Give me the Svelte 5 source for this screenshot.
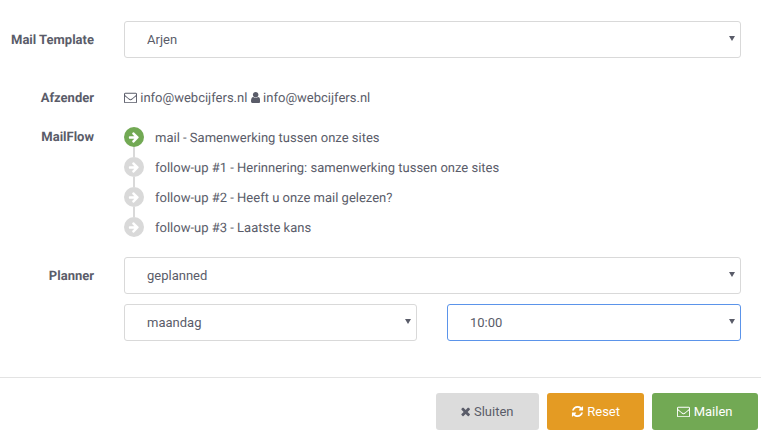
<script lang="ts">
	const icons = {
		envelope: "M1664 1504v-768q-32 36-69 66-268 206-426 338-51 43-83 67t-86.500 48.500-102.500 24.500h-2q-48 0-102.500-24.500t-86.500-48.500-83-67q-158-132-426-338-37-30-69-66v768q0 13 9.500 22.500t22.500 9.500h1472q13 0 22.500-9.500t9.500-22.500zm0-1051v-24.500l-.5-13-3-12.500-5.500-9-9-7.500-14-2.500h-1472q-13 0-22.500 9.500t-9.500 22.500q0 168 147 284 193 152 401 317 6 5 35 29.500t46 37.500 44.500 31.500 50.500 27.500 43 9h2q20 0 43-9t50.500-27.500 44.500-31.500 46-37.500 35-29.500q208-165 401-317 54-43 100.500-115.500t46.500-131.500zm128-37v1088q0 66-47 113t-113 47h-1472q-66 0-113-47t-47-113v-1088q0-66 47-113t113-47h1472q66 0 113 47t47 113z",
		user: "M1536 1399q0 109-62.500 187t-150.500 78h-854q-88 0-150.500-78t-62.500-187q0-85 8.500-160.500t31.500-152 58.500-131 94-89 134.500-34.500q131 128 313 128t313-128q76 0 134.500 34.500t94 89 58.500 131 31.500 152 8.500 160.500zm-256-887q0 159-112.500 271.500t-271.500 112.500-271.500-112.500-112.500-271.500 112.500-271.500 271.500-112.500 271.500 112.500 112.500 271.500z",
		arrow: "M1600 960q0 54-37 91l-651 651q-39 37-91 37-51 0-90-37l-75-75q-38-38-38-91t38-91l293-293h-704q-52 0-84.500-37.500t-32.500-90.500v-128q0-53 32.500-90.500t84.500-37.500h704l-293-294q-38-36-38-90t38-90l75-75q38-38 90-38 53 0 91 38l651 651q37 35 37 90z",
		times: "M1490 1322q0 40-28 68l-136 136q-28 28-68 28t-68-28l-294-294-294 294q-28 28-68 28t-68-28l-136-136q-28-28-28-68t28-68l294-294-294-294q-28-28-28-68t28-68l136-136q28-28 68-28t68 28l294 294 294-294q28-28 68-28t68 28l136 136q28 28 28 68t-28 68l-294 294 294 294q28 28 28 68z",
		refresh: "M1639 1056q0 5-1 7-64 268-268 434.500t-478 166.500q-146 0-282.500-55t-243.500-157l-129 129q-19 19-45 19t-45-19-19-45v-448q0-26 19-45t45-19h448q26 0 45 19t19 45-19 45l-137 137q71 66 161 102t187 36q134 0 250-65t186-179q11-17 53-117 8-23 30-23h192q13 0 22.500 9.500t9.500 22.500zm25-800v448q0 26-19 45t-45 19h-448q-26 0-45-19t-19-45 19-45l138-138q-148-137-349-137-134 0-250 65t-186 179q-11 17-53 117-8 23-30 23h-199q-13 0-22.500-9.500t-9.500-22.500v-7q65-268 270-434.500t480-166.500q146 0 284 55.500t245 156.500l130-129q19-19 45-19t45 19 19 45z"
	}

	const flow = [
		"mail - Samenwerking tussen onze sites",
		"follow-up #1 - Herinnering: samenwerking tussen onze sites",
		"follow-up #2 - Heeft u onze mail gelezen?",
		"follow-up #3 - Laatste kans"
	]
</script>

{#snippet icon(d, cls = "")}
	<svg class="icon {cls}" viewBox={cls === "narrow" ? "256 0 1280 1792" : "0 0 1792 1792"} aria-hidden="true"><path fill="currentColor" {d} /></svg>
{/snippet}

<main>
	<form class="body">
		<div class="row template">
			<label for="tpl">Mail Template</label>
			<div class="select"><select id="tpl"><option>Arjen</option></select></div>
		</div>

		<div class="row sender">
			<span class="label">Afzender</span>
			<div class="value">
				{@render icon(icons.envelope)} info@webcijfers.nl
				{@render icon(icons.user, "narrow")} info@webcijfers.nl
			</div>
		</div>

		<div class="row mailflow">
			<span class="label">MailFlow</span>
			<ul>
				{#each flow as step, i}
					<li class:active={i === 0}>
						<span class="dot">{@render icon(icons.arrow)}</span>
						{step}
					</li>
				{/each}
			</ul>
		</div>

		<div class="row planner">
			<label for="plan">Planner</label>
			<div class="selects">
				<div class="select wide"><select id="plan"><option>geplanned</option></select></div>
				<div class="select"><select><option>maandag</option></select></div>
				<div class="select"><select class="focus"><option>10:00</option></select></div>
			</div>
		</div>
	</form>

	<footer>
		<button type="button" class="grey">{@render icon(icons.times, "narrow")} Sluiten</button>
		<button type="button" class="orange">{@render icon(icons.refresh)} Reset</button>
		<button type="button" class="green">{@render icon(icons.envelope)} Mailen</button>
	</footer>
</main>

<style>
	:global(body) {
		background: #fff;
	}

	main {
		height: 439px;
		font-family: Roboto, sans-serif;
		font-size: 13px;
		color: #5a5c69;
		text-rendering: geometricPrecision;
		overflow: hidden;
	}

	.body {
		height: 356px;
		padding: 21px 20px 0 0;
		box-sizing: border-box;
	}

	.row {
		display: grid;
		grid-template-columns: 94px 1fr;
		column-gap: 30px;
	}

	label, .label {
		font-weight: 700;
		text-align: right;
		line-height: 22px;
	}

	.template label, .planner label {
		line-height: 39px;
	}

	.sender {
		margin-top: 28px;
		line-height: 22px;
	}

	.mailflow {
		margin-top: 17px;
	}

	.planner {
		margin-top: 20px;
	}

	.select {
		position: relative;
	}

	.select::after {
		content: "";
		position: absolute;
		right: 6px;
		top: 15px;
		border-left: 3px solid transparent;
		border-right: 3px solid transparent;
		border-top: 5px solid #5a5c69;
		pointer-events: none;
	}

	select {
		display: block;
		width: 100%;
		height: 37px;
		padding: 0 22px;
		font: inherit;
		color: inherit;
		background: #fff;
		border: 1px solid #d9d9d9;
		border-radius: 3px;
		outline: none;
		appearance: none;
	}

	.focus {
		border-color: #5b94ea;
	}

	.selects {
		display: grid;
		grid-template-columns: 293px 1fr;
		gap: 10px 30px;
	}

	.wide {
		grid-column: 1 / -1;
	}

	ul {
		list-style: none;
		margin: 0;
		padding: 0;
	}

	li {
		position: relative;
		display: flex;
		align-items: flex-start;
		gap: 11px;
		height: 20px;
		line-height: 24px;
		margin-bottom: 10px;
	}

	li:last-child {
		margin-bottom: 0;
	}

	li:not(:last-child)::after {
		content: "";
		position: absolute;
		left: 9px;
		top: 20px;
		width: 2px;
		height: 10px;
		background: #d9d9d9;
	}

	.dot {
		display: flex;
		align-items: center;
		justify-content: center;
		width: 20px;
		height: 20px;
		border-radius: 50%;
		background: #d9d9d9;
		color: #fff;
	}

	.dot .icon {
		width: 12px;
		height: 12px;
	}

	.active .dot {
		background: #72a954;
	}

	.icon {
		display: inline-block;
		width: 13px;
		height: 13px;
		vertical-align: -2px;
	}

	.narrow {
		width: 9.3px;
	}

	footer {
		display: flex;
		justify-content: flex-end;
		gap: 8px;
		margin-top: 21px;
		padding: 15px 3px 0 0;
		border-top: 1px solid #e3e3e3;
	}

	button {
		height: 37px;
		padding: 0;
		font: inherit;
		border: none;
		border-radius: 3px;
		color: #fff;
	}

	.grey {
		width: 103px;
		background: #dcdcdc;
		color: #5a5c69;
	}

	.orange {
		width: 97px;
		background: #e49b23;
	}

	.green {
		width: 106px;
		background: #72a954;
	}
</style>
